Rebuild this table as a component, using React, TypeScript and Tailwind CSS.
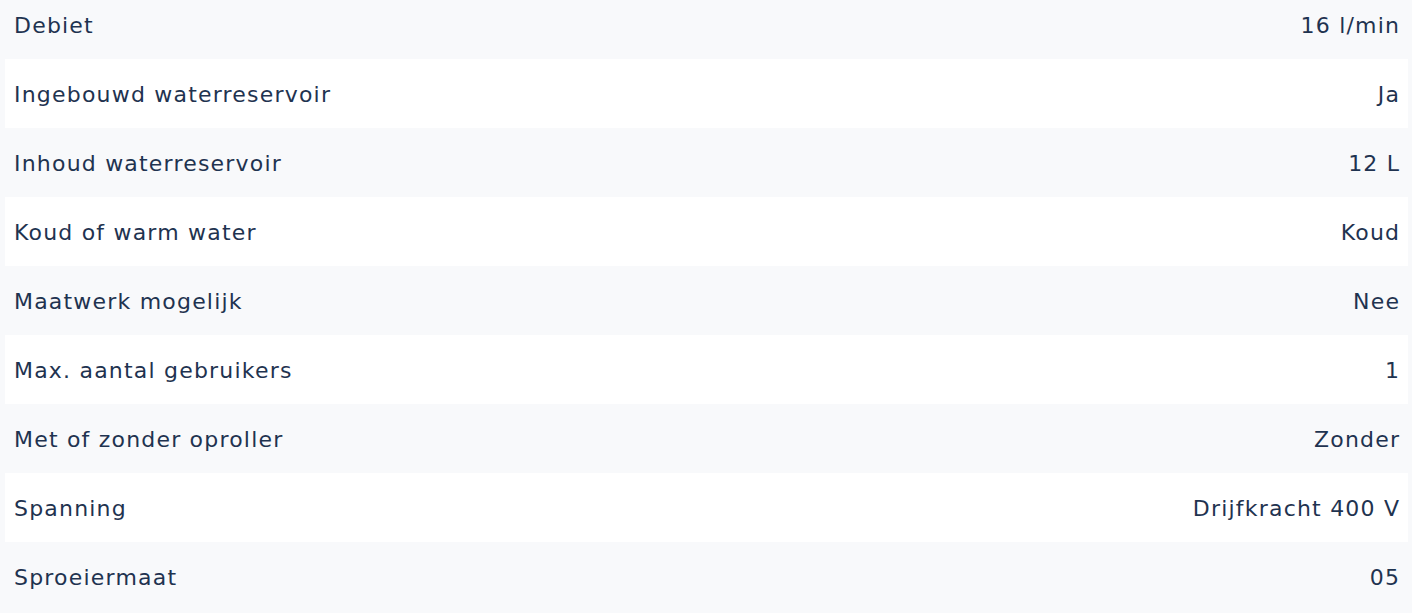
const specs = [
  { label: "Debiet", value: "16 l/min" },
  { label: "Ingebouwd waterreservoir", value: "Ja" },
  { label: "Inhoud waterreservoir", value: "12 L" },
  { label: "Koud of warm water", value: "Koud" },
  { label: "Maatwerk mogelijk", value: "Nee" },
  { label: "Max. aantal gebruikers", value: "1" },
  { label: "Met of zonder oproller", value: "Zonder" },
  { label: "Spanning", value: "Drijfkracht 400 V" },
  { label: "Sproeiermaat", value: "05" },
];

export default function App() {
  return (
    <div className="h-[613px] overflow-hidden bg-[#f8f9fb] pl-[5px] pr-[4px] font-['DejaVu_Sans',sans-serif] text-[#1f3350]">
      <div className="-mt-[10px] flex flex-col">
        {specs.map((s, i) => (
          <div
            key={s.label}
            className={`flex h-[69px] items-center justify-between px-[9px] pt-[1px] text-[22px] tracking-[1.2px] ${i % 2 ? "bg-white" : "bg-[#f8f9fb]"}`}
          >
            <span>{s.label}</span>
            <span className="-mr-[1.2px]">{s.value}</span>
          </div>
        ))}
      </div>
    </div>
  );
}
